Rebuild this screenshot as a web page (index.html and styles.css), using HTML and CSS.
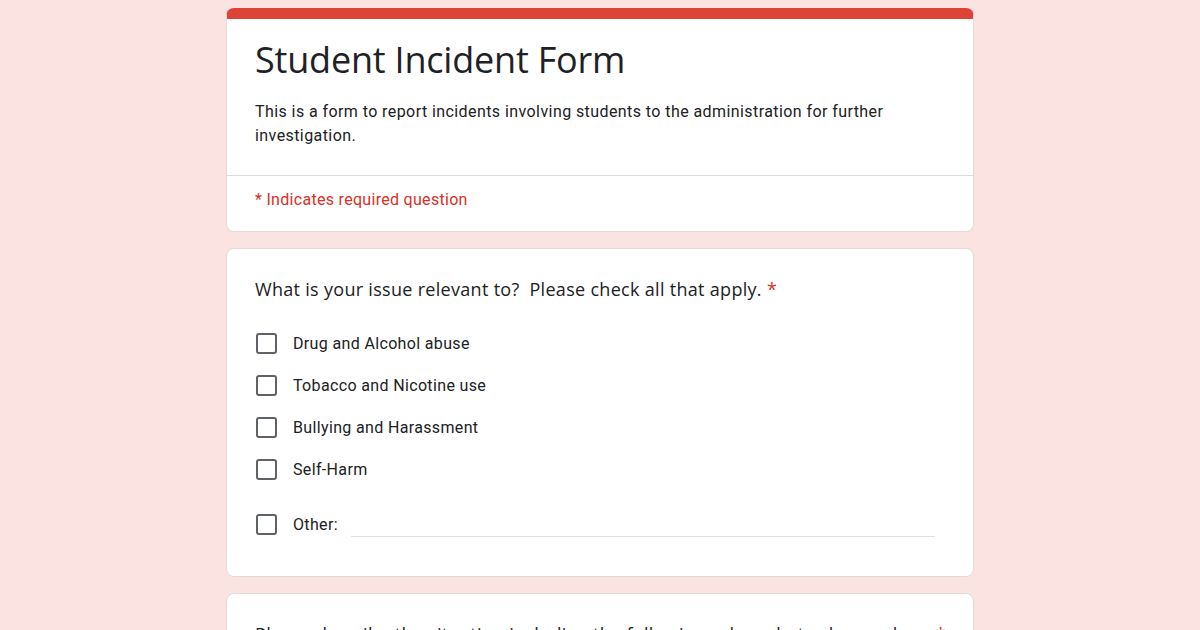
FILE: index.html
```html
<!DOCTYPE html>
<html>
  <head>
    <meta charset="utf-8">
    <title>Student Incident Form</title>
    <meta name="viewport" content="width=device-width, initial-scale=1">
    <link rel="stylesheet" href="styles.css">
  </head>
  <body>
    <div class="form-wrap">
      <!-- Header card -->
      <div class="card header-card">
        <div class="header-top">
          <h1 class="form-title">Student Incident Form</h1>
          <p class="form-desc">This is a form to report incidents involving students to the administration for further investigation.</p>
        </div>
        <div class="required-note">* Indicates required question</div>
      </div>

      <!-- Question 1 -->
      <div class="card question-card">
        <div class="question-title">What is your issue relevant to?&nbsp; Please check all that apply. <span class="req">*</span></div>
        <div class="options">
          <label class="option"><span class="box"></span><span>Drug and Alcohol abuse</span></label>
          <label class="option"><span class="box"></span><span>Tobacco and Nicotine use</span></label>
          <label class="option"><span class="box"></span><span>Bullying and Harassment</span></label>
          <label class="option"><span class="box"></span><span>Self-Harm</span></label>
          <label class="option other"><span class="box"></span><span>Other:</span><span class="other-line"></span></label>
        </div>
      </div>

      <!-- Question 2 -->
      <div class="card question-card">
        <div class="question-title one-line">Please describe the situation including the following: who, what, where, when. <span class="req">*</span></div>
      </div>
    </div>
  </body>
</html>
```

FILE: styles.css
```css
body {
  margin: 0;
  background-color: #fae3e1;
  font-family: Roboto, "Liberation Sans", Arial, sans-serif;
  color: #202124;
}

.form-wrap {
  width: 748px;
  margin: 0 auto;
  padding-top: 8px;
}

.card {
  background: #fff;
  border: 1px solid #e6dad9;
  border-radius: 8px;
  margin-bottom: 16px;
}

.header-card {
  border-top: 11px solid #db4437;
}

.header-top {
  padding: 17px 28px 27px;
  border-bottom: 1px solid #dadce0;
}

.form-title {
  margin: 0;
  font-family: "Open Sans", Roboto, sans-serif;
  font-weight: 400;
  font-size: 36px;
  line-height: 48px;
  letter-spacing: -0.2px;
}

.form-desc {
  margin: 16px 0 0;
  font-size: 16px;
  line-height: 24px;
  letter-spacing: 0.42px;
}

.required-note {
  padding: 12px 28px 19px;
  font-size: 16px;
  line-height: 24px;
  color: #d93025;
  letter-spacing: 0.3px;
}

.question-card {
  padding: 28px 28px 24px;
}

.question-title {
  font-family: "Open Sans", Roboto, sans-serif;
  font-size: 18px;
  line-height: 24px;
  letter-spacing: 0.3px;
}

.one-line {
  white-space: nowrap;
  overflow: hidden;
}

.req {
  color: #d93025;
}

.options {
  margin-top: 21px;
}

.option {
  display: flex;
  align-items: center;
  height: 42px;
  font-size: 16px;
  letter-spacing: 0.35px;
}

.option.other {
  height: 56px;
  margin-top: 6px;
}

.box {
  width: 17px;
  height: 17px;
  border: 2px solid #5f6368;
  border-radius: 3px;
  margin-left: 1px;
  margin-right: 16px;
  flex-shrink: 0;
}

.other-line {
  flex: 1;
  align-self: flex-end;
  margin: 0 10px 15px 13px;
  border-bottom: 1px solid #e0e0e0;
}
```
